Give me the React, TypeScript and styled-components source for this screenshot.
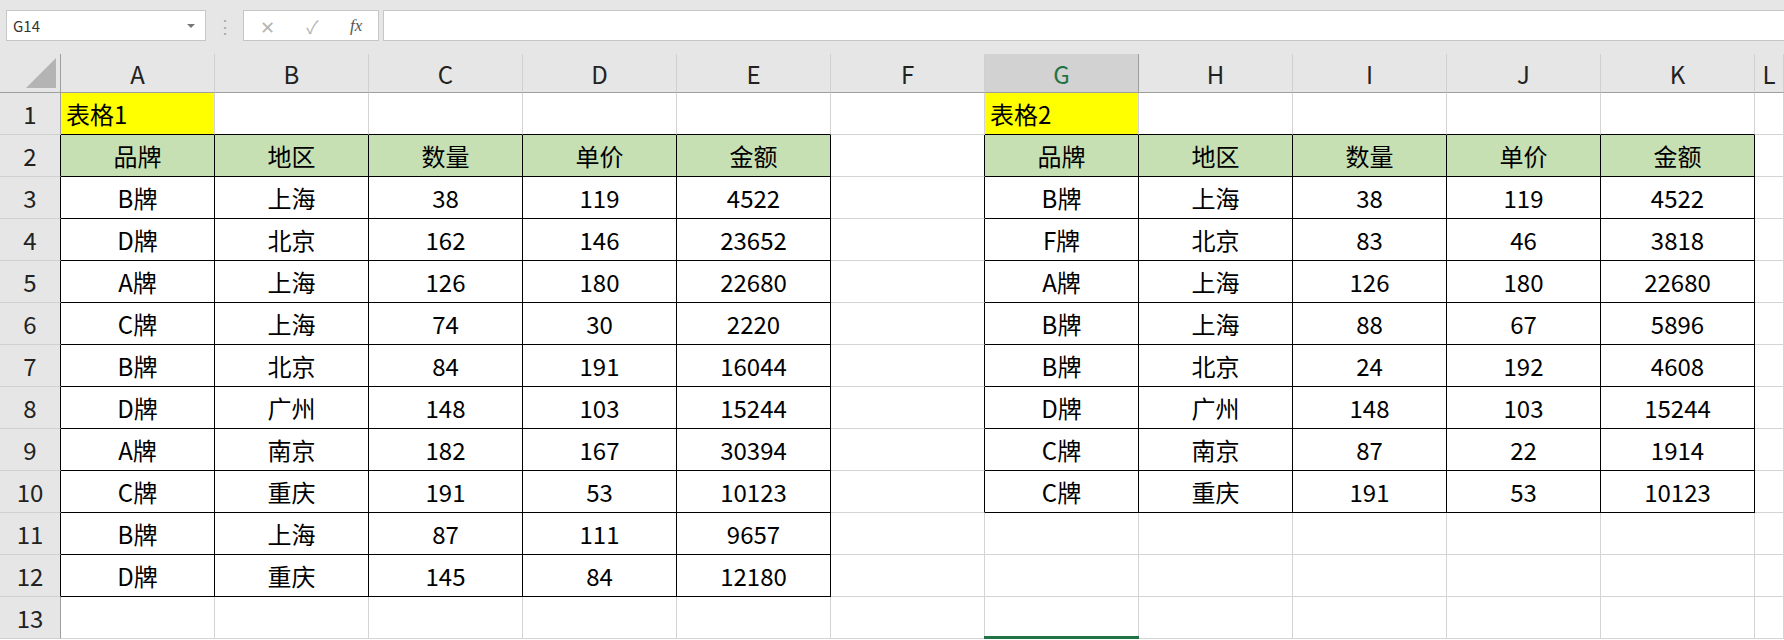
import React from "react";
import styled, { createGlobalStyle } from "styled-components";

const Global = createGlobalStyle`
  html, body { margin: 0; padding: 0; background: #fff; }
  body { font-family: "Noto Sans CJK SC", "Noto Sans", sans-serif; }
`;

const Page = styled.div`width: 1784px; height: 640px; overflow: hidden; background: #fff;`;

const Bar = styled.div`
  height: 54px; background: #e6e6e6; display: flex; align-items: flex-start;
  padding: 10px 0 0 6px; box-sizing: border-box; gap: 0;
`;
const NameBox = styled.div`
  width: 200px; height: 31px; background: #fff; border: 1px solid #c6c6c6; box-sizing: border-box;
  display: flex; align-items: center; justify-content: space-between; padding: 0 10px 0 6px;
  font-size: 15px; color: #333;
`;
const Tri = styled.span`
  width: 0; height: 0; border-left: 4px solid transparent; border-right: 4px solid transparent;
  border-top: 4px solid #777;
`;
const Dots = styled.div`width: 37px; text-align: center; color: #aaa; font-size: 18px; line-height: 31px;`;
const Icons = styled.div`
  width: 136px; height: 31px; background: #fff; border: 1px solid #c6c6c6; box-sizing: border-box;
  display: flex; align-items: center; justify-content: space-around; color: #b5b5b5; font-size: 18px;
`;
const Fx = styled.span`font-family: "Liberation Serif", serif; font-style: italic; color: #555; font-size: 17px;`;
const Formula = styled.div`
  flex: 1; margin-left: 4px; height: 31px; background: #fff; border: 1px solid #c6c6c6; border-right: none; box-sizing: border-box;
`;

const Grid = styled.div`
  display: grid;
  grid-template-columns: 61px repeat(11, 154px) 1fr;
  grid-template-rows: 39px repeat(13, 42px);
`;

const Corner = styled.div`
  background: #e6e6e6; border-right: 1px solid #9e9e9e; border-bottom: 1px solid #9e9e9e; position: relative;
  &::after { content: ""; position: absolute; right: 4px; bottom: 4px; width: 0; height: 0;
    border-left: 30px solid transparent; border-bottom: 30px solid #b4b4b4; }
`;
const ColHead = styled.div<{ $sel?: boolean }>`
  background: ${p => (p.$sel ? "#d2d2d2" : "#e6e6e6")};
  color: ${p => (p.$sel ? "#217346" : "#222")};
  border-right: 1px solid ${p => (p.$sel ? "#9e9e9e" : "#d0d0d0")};
  border-bottom: 1px solid #9e9e9e;
  display: flex; align-items: center; justify-content: center; font-size: 24px; box-sizing: border-box;
`;
const RowHead = styled.div<{ $edge?: boolean }>`
  background: #e6e6e6; color: #222; border-bottom: 1px solid #d0d0d0;
  border-right: 1px solid ${p => (p.$edge ? "#000" : "#9e9e9e")};
  display: flex; align-items: center; justify-content: center; font-size: 24px; box-sizing: border-box;
`;
const Cell = styled.div<{ $bg: string; $r: string; $b: string; $left?: boolean; $mark?: boolean }>`
  background: ${p => p.$bg}; border-right: 1px solid ${p => p.$r}; border-bottom: 1px solid ${p => p.$b};
  box-sizing: border-box; display: flex; align-items: center;
  justify-content: ${p => (p.$left ? "flex-start" : "center")};
  padding-left: ${p => (p.$left ? "5px" : "0")};
  font-size: 24px; color: #000; white-space: nowrap; position: relative;
  ${p => p.$mark ? `&::after{content:"";position:absolute;left:-1px;right:-1px;bottom:-1px;height:3px;background:#217346;}` : ""}
`;

const head = ["品牌", "地区", "数量", "单价", "金额"];
const t1 = [
  ["B牌", "上海", "38", "119", "4522"],
  ["D牌", "北京", "162", "146", "23652"],
  ["A牌", "上海", "126", "180", "22680"],
  ["C牌", "上海", "74", "30", "2220"],
  ["B牌", "北京", "84", "191", "16044"],
  ["D牌", "广州", "148", "103", "15244"],
  ["A牌", "南京", "182", "167", "30394"],
  ["C牌", "重庆", "191", "53", "10123"],
  ["B牌", "上海", "87", "111", "9657"],
  ["D牌", "重庆", "145", "84", "12180"],
];
const t2 = [
  ["B牌", "上海", "38", "119", "4522"],
  ["F牌", "北京", "83", "46", "3818"],
  ["A牌", "上海", "126", "180", "22680"],
  ["B牌", "上海", "88", "67", "5896"],
  ["B牌", "北京", "24", "192", "4608"],
  ["D牌", "广州", "148", "103", "15244"],
  ["C牌", "南京", "87", "22", "1914"],
  ["C牌", "重庆", "191", "53", "10123"],
];
const cols = ["A", "B", "C", "D", "E", "F", "G", "H", "I", "J", "K", "L"];

// r: 1..13, c: 0..11
function inTable(r: number, c: number) {
  if (c >= 0 && c <= 4 && r >= 2 && r <= 12) return true;
  if (c >= 6 && c <= 10 && r >= 2 && r <= 10) return true;
  return false;
}
function content(r: number, c: number): string {
  if (r === 1 && c === 0) return "表格1";
  if (r === 1 && c === 6) return "表格2";
  if (r === 2 && c <= 4) return head[c];
  if (r === 2 && c >= 6 && c <= 10) return head[c - 6];
  if (c <= 4 && r >= 3 && r <= 12) return t1[r - 3][c];
  if (c >= 6 && c <= 10 && r >= 3 && r <= 10) return t2[r - 3][c - 6];
  return "";
}

export default function App() {
  const cells: React.ReactNode[] = [];
  cells.push(<Corner key="corner" />);
  cols.forEach((l, i) => cells.push(<ColHead key={"h" + l} $sel={l === "G"}>{l}</ColHead>));
  for (let r = 1; r <= 13; r++) {
    cells.push(<RowHead key={"r" + r} $edge={inTable(r, 0)}>{r}</RowHead>);
    for (let c = 0; c < 12; c++) {
      const inT = inTable(r, c);
      const right = inT || inTable(r, c + 1) ? "#000" : "#d4d4d4";
      const bottom = inT || inTable(r + 1, c) ? "#000" : "#d4d4d4";
      const title = r === 1 && (c === 0 || c === 6);
      const bg = title ? "#ffff00" : r === 2 && inT ? "#c6e0b4" : "#fff";
      cells.push(
        <Cell key={r + "-" + c} $bg={bg} $r={right} $b={bottom} $left={title} $mark={r === 13 && c === 6}>
          {content(r, c)}
        </Cell>
      );
    }
  }
  return (
    <Page>
      <Global />
      <Bar>
        <NameBox>G14<Tri /></NameBox>
        <Dots>⋮</Dots>
        <Icons>
          <span>✕</span>
          <span>✓</span>
          <Fx>fx</Fx>
        </Icons>
        <Formula />
      </Bar>
      <Grid>{cells}</Grid>
    </Page>
  );
}
